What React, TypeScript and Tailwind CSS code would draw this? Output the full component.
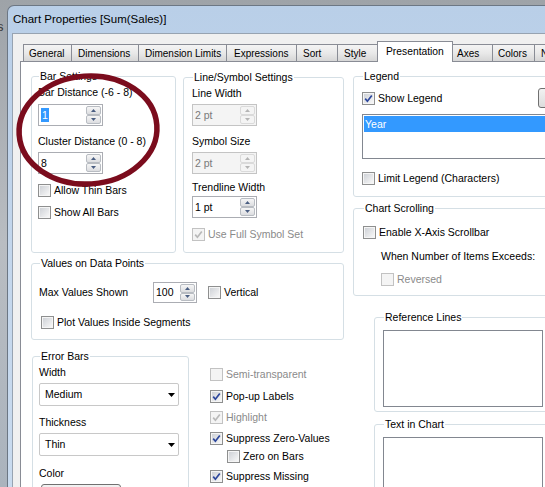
import type { ReactNode } from 'react';
import clsx from 'clsx';

type TabDef = { label: string; cls: string; active?: boolean };

const tabs: TabDef[] = [
  { label: 'General', cls: 'w-[49px] pl-[5px]' },
  { label: 'Dimensions', cls: 'w-[68px] pl-[6px]' },
  { label: 'Dimension Limits', cls: 'w-[89px] pl-[6px]' },
  { label: 'Expressions', cls: 'w-[71px] pl-[7px]' },
  { label: 'Sort', cls: 'w-[42px] pl-[6px]' },
  { label: 'Style', cls: 'w-[41px] pl-[6px]' },
  { label: 'Presentation', cls: 'w-[76px] pl-[8px]', active: true },
  { label: 'Axes', cls: 'w-[41px] pl-[4px]' },
  { label: 'Colors', cls: 'w-[43px] pl-[5px]' },
  { label: 'Number', cls: 'w-[60px] pl-[6px]' },
];

function Tab({ t }: { t: TabDef }) {
  if (t.active) {
    return (
      <div
        className={clsx(
          'relative z-10 -ml-px flex h-[21px] shrink-0 items-center border-x border-t border-[#898c95] bg-white pb-[2px] text-[10.3px]',
          t.cls,
        )}
      >
        {t.label}
      </div>
    );
  }
  return (
    <div
      className={clsx(
        '-ml-px mb-px flex h-[17px] shrink-0 items-center border-x border-t border-[#898c95] bg-gradient-to-b from-[#f4f4f4] via-[#e9e9e9] to-[#d6d6d6] text-[10px] first:ml-0',
        t.cls,
      )}
    >
      {t.label}
    </div>
  );
}

function Box({ checked, disabled }: { checked?: boolean; disabled?: boolean }) {
  return (
    <span
      className={clsx(
        'relative flex h-[13px] w-[13px] shrink-0 border',
        disabled ? 'border-[#c2c2c2] bg-[#f4f4f4]' : 'border-[#8e8f8f] bg-[#f5f5f5]',
      )}
    >
      <span
        className={clsx(
          'm-[1px] flex-1',
          disabled ? 'bg-[#f4f4f4]' : 'bg-gradient-to-br from-[#cfd2d7] to-[#f7f7f7]',
        )}
      />
      {checked && (
        <svg className="absolute inset-0" width="11" height="11" viewBox="0 0 11 11">
          <path
            d="M2.2 5.6 L4.4 8.2 L8.8 2.4"
            fill="none"
            stroke={disabled ? '#b9b9b9' : '#2d479c'}
            strokeWidth="1.7"
          />
        </svg>
      )}
    </span>
  );
}

function Check({
  label,
  checked,
  disabled,
  className,
}: {
  label: string;
  checked?: boolean;
  disabled?: boolean;
  className?: string;
}) {
  return (
    <div className={clsx('flex h-[13px] items-center gap-[3px]', className)}>
      <Box checked={checked} disabled={disabled} />
      <span className={clsx('whitespace-nowrap', disabled && 'text-[#8a8a8a]')}>{label}</span>
    </div>
  );
}

function SpinBtn({ up, disabled }: { up?: boolean; disabled?: boolean }) {
  return (
    <div
      className={clsx(
        'flex flex-1 items-center justify-center rounded-[2px] border',
        disabled
          ? 'border-[#dadada] bg-[#f4f4f4]'
          : 'border-[#b8bcc2] bg-gradient-to-b from-[#f6f6f6] to-[#dcdde0]',
      )}
    >
      <svg width="5" height="3" viewBox="0 0 5 3">
        <path d={up ? 'M0 3 L2.5 0 L5 3Z' : 'M0 0 L5 0 L2.5 3Z'} fill={disabled ? '#b4b4b4' : '#4a5e82'} />
      </svg>
    </div>
  );
}

function Spin({
  value,
  className,
  disabled,
  selected,
}: {
  value: string;
  className?: string;
  disabled?: boolean;
  selected?: boolean;
}) {
  return (
    <div
      className={clsx(
        'flex shrink-0 border',
        disabled ? 'border-[#c4c4c4] bg-[#f4f4f4] text-[#7a7a7a]' : 'border-[#abadb3] bg-white',
        className,
      )}
    >
      <div className="flex flex-1 items-center pl-[2px]">
        {selected ? <span className="bg-[#3399ff] px-[1px] leading-[14px] text-white">{value}</span> : value}
      </div>
      <div className="flex w-[16px] flex-col py-[1px] pr-[1px]">
        <SpinBtn up disabled={disabled} />
        <SpinBtn disabled={disabled} />
      </div>
    </div>
  );
}

function Select({ value, className }: { value: string; className?: string }) {
  return (
    <div
      className={clsx(
        'flex h-[23px] w-[140px] shrink-0 items-center justify-between rounded-[2px] border border-[#c8c8c8] bg-white pl-[5px] pr-[3px]',
        className,
      )}
    >
      <span>{value}</span>
      <svg width="7" height="4" viewBox="0 0 7 4">
        <path d="M0 0H7L3.5 4Z" fill="#000" />
      </svg>
    </div>
  );
}

function Group({ title, className, children }: { title: string; className?: string; children?: ReactNode }) {
  return (
    <fieldset className={clsx('shrink-0 rounded-[3px] border border-[#d5dfe5]', className)}>
      <legend className="ml-[1px] px-[1px] leading-[13px]">{title}</legend>
      {children}
    </fieldset>
  );
}

function Label({ children, className }: { children: ReactNode; className?: string }) {
  return <div className={clsx('whitespace-nowrap leading-[13px]', className)}>{children}</div>;
}

export default function App() {
  return (
    <div className="relative flex h-[487px] w-[545px] overflow-hidden bg-gradient-to-b from-[#9ea3a8] via-[#b9bdc2] to-[#aab3bd] font-['Liberation_Sans',Arial,sans-serif] text-[10.5px] leading-[13px] text-black">
      <div className="w-[7px] shrink-0 overflow-hidden">
        <div className="-ml-[3px] mt-[20px] text-[13px] text-[#3a3a3a]">s</div>
      </div>

      <div className="mt-[5px] flex w-[640px] shrink-0 flex-col overflow-hidden rounded-tl-[7px] border-l border-t border-[#6c7784] bg-gradient-to-b from-[#b9cfe8] via-[#c3d6ec] to-[#c9dbef]">
        <div className="flex h-[27px] shrink-0 items-center pl-[5px] text-[11.5px]">Chart Properties [Sum(Sales)]</div>

        <div className="flex min-h-0 flex-1 pl-[4px]">
          <div className="flex min-h-0 flex-1 flex-col border-l border-t border-[#97a3b1] bg-[#f0f0f0] pl-[7px]">
            <div className="relative z-10 -mb-px flex h-[28px] shrink-0 items-end pl-[3px]">
              {tabs.map((t) => (
                <Tab key={t.label} t={t} />
              ))}
            </div>

            <div className="flex min-h-0 flex-1 items-start overflow-hidden border-l border-t border-[#898c95] bg-white pl-[10px] pt-[8px]">
              {/* left column */}
              <div className="flex w-[313px] shrink-0 flex-col">
                <div className="flex shrink-0 items-start">
                  <Group title="Bar Settings" className="h-[183px] w-[145px] px-[6px]">
                    <Label className="mt-[3px]">Bar Distance (-6 - 8)</Label>
                    <Spin value="1" selected className="mt-[5px] h-[22px] w-[65px]" />
                    <Label className="mt-[9px]">Cluster Distance (0 - 8)</Label>
                    <Spin value="8" className="mt-[4px] h-[22px] w-[65px]" />
                    <Check label="Allow Thin Bars" className="mt-[10px]" />
                    <Check label="Show All Bars" className="mt-[9px]" />
                  </Group>
                  <Group title="Line/Symbol Settings" className="ml-[7px] mt-[1px] h-[182px] w-[161px] px-[8px]">
                    <Label className="mt-[3px]">Line Width</Label>
                    <Spin value="2 pt" disabled className="mt-[4px] h-[22px] w-[65px]" />
                    <Label className="mt-[9px]">Symbol Size</Label>
                    <Spin value="2 pt" disabled className="mt-[4px] h-[22px] w-[65px]" />
                    <Label className="mt-[7px]">Trendline Width</Label>
                    <Spin value="1 pt" className="mt-[2px] h-[22px] w-[65px]" />
                    <Check label="Use Full Symbol Set" checked disabled className="mt-[10px]" />
                  </Group>
                </div>

                <Group title="Values on Data Points" className="mt-[4px] h-[83px] w-[313px] px-[7px]">
                  <div className="mt-[12px] flex h-[21px] items-center">
                    <span className="w-[114px] shrink-0">Max Values Shown</span>
                    <Spin value="100" className="h-[21px] w-[44px]" />
                    <Check label="Vertical" className="ml-[11px]" />
                  </div>
                  <Check label="Plot Values Inside Segments" className="ml-[2px] mt-[13px]" />
                </Group>

                <div className="mt-[10px] flex shrink-0 items-start">
                  <Group title="Error Bars" className="ml-[1px] h-[150px] w-[157px] px-[6px]">
                    <Label className="mt-[3px]">Width</Label>
                    <Select value="Medium" className="mt-[4px]" />
                    <Label className="mt-[10px]">Thickness</Label>
                    <Select value="Thin" className="mt-[4px]" />
                    <Label className="mt-[11px]">Color</Label>
                    <div className="ml-[2px] mt-[4px] h-[20px] w-[80px] rounded-[3px] border border-[#707070] bg-gradient-to-b from-[#f2f2f2] to-[#dddddd]" />
                  </Group>
                  <div className="ml-[21px] flex flex-col pt-[18px]">
                    <Check label="Semi-transparent" disabled />
                    <Check label="Pop-up Labels" checked className="mt-[9px]" />
                    <Check label="Highlight" checked disabled className="mt-[8px]" />
                    <Check label="Suppress Zero-Values" checked className="mt-[8px]" />
                    <Check label="Zero on Bars" className="ml-[17px] mt-[5px]" />
                    <Check label="Suppress Missing" checked className="mt-[7px]" />
                  </div>
                </div>
              </div>

              {/* right column */}
              <div className="ml-[9px] flex w-[230px] shrink-0 flex-col">
                <Group title="Legend" className="h-[127px] w-[230px] px-[8px]">
                  <div className="mt-[5px] flex h-[20px] items-center">
                    <Check label="Show Legend" checked />
                    <div className="ml-auto h-[20px] w-[36px] rounded-[3px] border border-[#707070] bg-gradient-to-b from-[#f2f2f2] to-[#dcdcdc]" />
                  </div>
                  <div className="mt-[6px] h-[45px] border border-[#828790] bg-white p-[1px]">
                    <div className="h-[16px] bg-[#3399ff] pl-[1px] leading-[16px] text-white">Year</div>
                  </div>
                  <Check label="Limit Legend (Characters)" className="mt-[13px]" />
                </Group>

                <Group title="Chart Scrolling" className="mt-[5px] h-[94px] w-[230px] px-[9px]">
                  <Check label="Enable X-Axis Scrollbar" className="mt-[11px]" />
                  <Label className="ml-[18px] mt-[11px]">When Number of Items Exceeds:</Label>
                  <Check label="Reversed" disabled className="ml-[18px] mt-[10px]" />
                </Group>

                <Group title="Reference Lines" className="ml-[21px] mt-[15px] h-[101px] w-[209px] px-[8px]">
                  <div className="mt-[6px] h-[77px] w-[160px] border border-[#828790] bg-white" />
                </Group>

                <Group title="Text in Chart" className="ml-[21px] mt-[6px] h-[100px] w-[209px] px-[8px]">
                  <div className="mt-[6px] h-[77px] w-[160px] border border-[#828790] bg-white" />
                </Group>
              </div>
            </div>
          </div>
        </div>
      </div>

      <svg className="pointer-events-none absolute left-0 top-0" width="545" height="487">
        <ellipse
          cx="88"
          cy="130"
          rx="69"
          ry="54"
          transform="rotate(-4 88 130)"
          fill="none"
          stroke="#7b0c1d"
          strokeWidth="5.5"
        />
      </svg>
    </div>
  );
}
